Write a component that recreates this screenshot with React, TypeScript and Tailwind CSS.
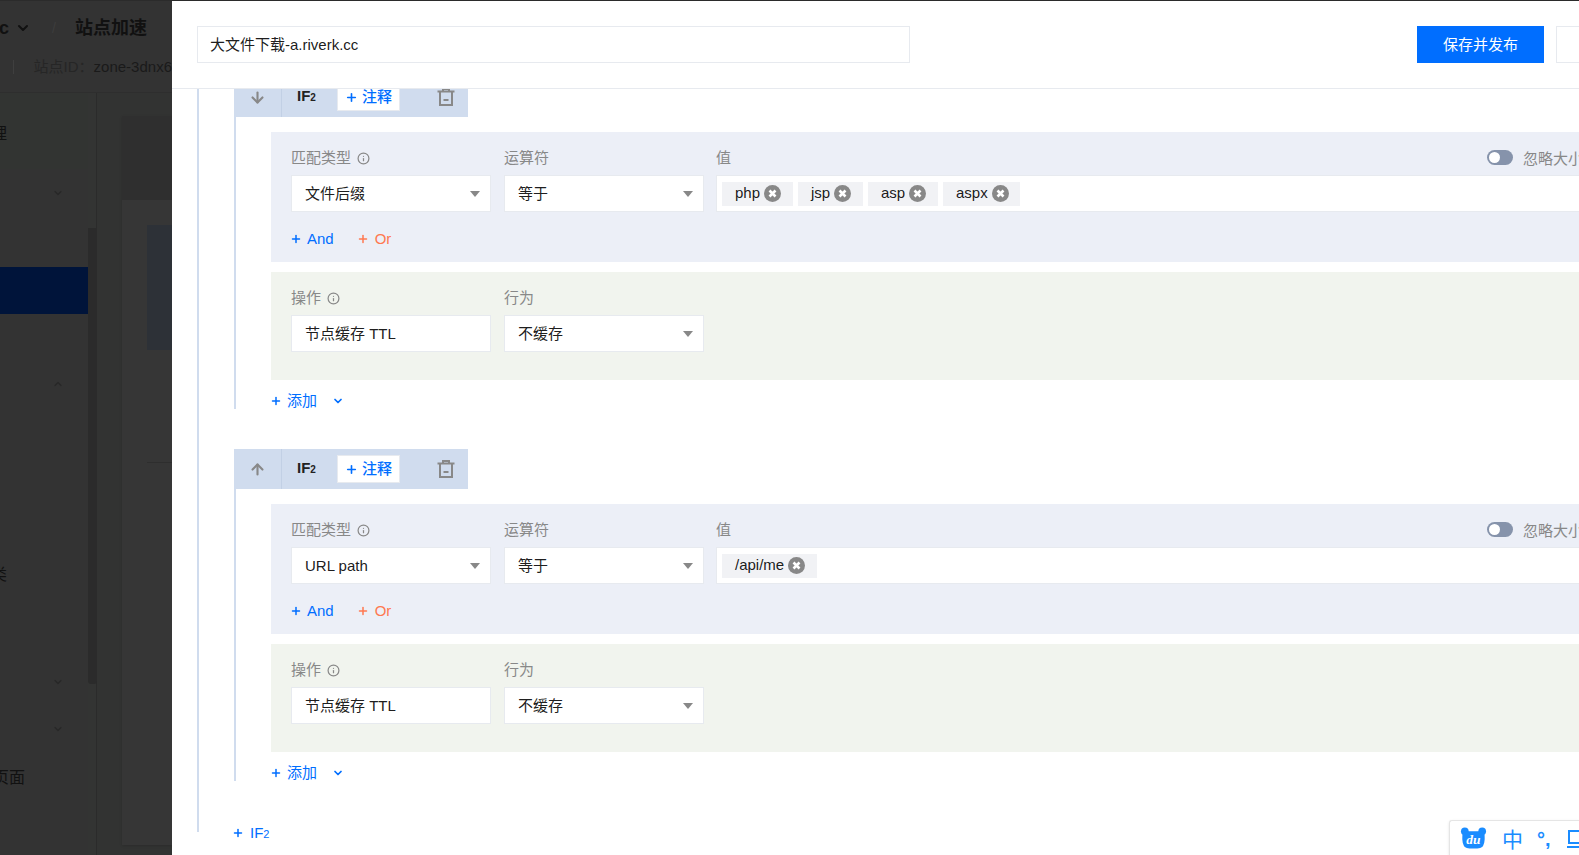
import React from 'react';
import { Plus, ArrowDown, ArrowUp, ChevronDown, ChevronUp, Info } from 'lucide-react';

const font = 'font-["Liberation_Sans","Noto_Sans_CJK_SC",sans-serif]';

const Caret = () => <span className="absolute right-[10px] top-[15px] w-0 h-0 border-x-[5px] border-x-transparent border-t-[6px] border-t-[#888888]" />;

const Select = ({ text }: { text: string }) => (
  <div className="relative w-[200px] shrink-0 h-[37px] bg-white border border-[#e7eaef] pl-[13px] leading-[35px] text-[15px] text-[#000000e6]">
    {text}
    <Caret />
  </div>
);

const Trash = () => (
  <svg width="18" height="18" viewBox="0 0 18 18" fill="none" stroke="#888888" strokeWidth="2">
    <path d="M0.5 3.5h17M6 3V1h6v2M3 4v13h12V4" />
    <path d="M6.5 12h5" />
  </svg>
);

const Chip = ({ text, w }: { text: string; w: string }) => (
  <span className={`flex items-center ${w} shrink-0 h-[24px] bg-[#f1f2f5] pl-[13px] text-[15px] text-[#000000e6]`}>
    {text}
    <span className="relative ml-[4px] w-[17px] h-[17px] rounded-full bg-[#888888] shrink-0">
      <svg className="absolute inset-0" viewBox="0 0 17 17" stroke="white" strokeWidth="2.6">
        <path d="M5.5 5.5l6 6M11.5 5.5l-6 6" />
      </svg>
    </span>
  </span>
);

const Label = ({ text, info }: { text: string; info?: boolean }) => (
  <div className="flex items-center gap-[6px] h-[20px] text-[15px] text-[#888888]">
    {text}
    {info && <Info size={13} strokeWidth={2.25} />}
  </div>
);

const RuleBlock = ({ up, match, chips }: { up?: boolean; match: string; chips: { text: string; w: string }[] }) => (
  <div className="w-[1400px]">
    <div className="border-l-2 border-[#d0dcee] h-[332px] w-[1345px]">
      <div className="flex items-center w-[234px] h-[40px] -ml-[2px] bg-[#d0dcee]">
        <div className="flex items-center justify-center w-[48px] h-full border-r border-[#c2d0e5] text-[#888888]">
          {up ? <ArrowUp size={17} strokeWidth={3} /> : <ArrowDown size={17} strokeWidth={3} />}
        </div>
        <span className="ml-[15px] -mt-[1px] text-[15px] font-bold text-[#222222]">IF<span className="text-[10px]">2</span></span>
        <div className="flex items-center gap-[4px] ml-[21px] w-[63px] h-[28px] shrink-0 bg-white border border-[#e7eaef] pl-[7px] text-[15px] font-medium text-[#006eff]">
          <Plus size={13} strokeWidth={3} />
          注释
        </div>
        <div className="ml-[37px]">
          <Trash />
        </div>
      </div>
      <div className="ml-[35px] mt-[15px] w-[1320px]">
        <div className="h-[130px] bg-[#eceff7] pl-[20px] pt-[16px]">
          <div className="flex h-[27px]">
            <div className="w-[213px] shrink-0"><Label text="匹配类型" info /></div>
            <div className="w-[212px] shrink-0"><Label text="运算符" /></div>
            <div className="w-[771px] shrink-0"><Label text="值" /></div>
            <div className="relative w-[26px] h-[15px] shrink-0 mt-[2px] rounded-full bg-[#8693ab]">
              <span className="absolute left-[2px] top-[2px] w-[11px] h-[11px] rounded-full bg-white" />
            </div>
            <div className="ml-[10px] text-[15px] text-[#888888] whitespace-nowrap">忽略大小写</div>
          </div>
          <div className="flex">
            <Select text={match} />
            <div className="w-[13px] shrink-0" />
            <Select text="等于" />
            <div className="w-[12px] shrink-0" />
            <div className="flex items-center gap-[5px] w-[1000px] shrink-0 h-[37px] bg-white border border-[#e7eaef] pl-[5px]">
              {chips.map((c) => <Chip key={c.text} text={c.text} w={c.w} />)}
            </div>
          </div>
          <div className="flex items-center h-[20px] mt-[17px] text-[15px]">
            <Plus size={12} strokeWidth={3} className="-ml-[1px] text-[#006eff]" />
            <span className="ml-[5px] text-[#006eff]">And</span>
            <Plus size={12} strokeWidth={3} className="ml-[23px] text-[#ff7850]" />
            <span className="ml-[6px] text-[#ff7850]">Or</span>
          </div>
        </div>
        <div className="h-[108px] mt-[10px] bg-[#f1f4ee] pl-[20px] pt-[16px]">
          <div className="flex h-[27px]">
            <div className="w-[213px] shrink-0"><Label text="操作" info /></div>
            <Label text="行为" />
          </div>
          <div className="flex gap-[13px]">
            <div className="w-[200px] shrink-0 h-[37px] bg-white border border-[#e7eaef] pl-[13px] leading-[35px] text-[15px] text-[#000000e6]">节点缓存 TTL</div>
            <Select text="不缓存" />
          </div>
        </div>
        <div className="flex items-center h-[20px] mt-[11px] text-[15px] text-[#006eff]">
          <Plus size={12} strokeWidth={3} className="-ml-[1px]" />
          <span className="ml-[5px]">添加</span>
          <ChevronDown size={12} strokeWidth={3.5} className="ml-[15px]" />
        </div>
      </div>
    </div>
  </div>
);

const SideItem = ({ text, className }: { text: string; className: string }) => (
  <div className={`text-[16px] text-[#111111] whitespace-nowrap ${className}`}>{text}</div>
);

const Backdrop = () => (
  <div className="w-[172px] shrink-0 h-full bg-[#333333] flex flex-col overflow-hidden">
    <div className="h-[92px] shrink-0 border-b border-[#2e2e2e] overflow-hidden">
      <div className="flex items-center h-[52px] pt-[2px] text-[18px] font-bold text-[#111111] whitespace-nowrap">
        <span className="-ml-[1px]">c</span>
        <ChevronDown size={16} strokeWidth={3} className="ml-[6px]" />
        <span className="ml-[21px] text-[#3d3d3d] font-normal text-[14px]">/</span>
        <span className="ml-[19px]">站点加速</span>
      </div>
      <div className="flex items-center h-[24px] mt-[2px] text-[15px] whitespace-nowrap">
        <span className="ml-[13px] w-px h-[14px] bg-[#3f3f3f]" />
        <span className="ml-[20px] text-[#262626]">站点ID：<span className="text-[#1a1a1a]">zone-3dnx6</span></span>
      </div>
    </div>
    <div className="flex flex-1 min-h-0">
      <div className="w-[88px] shrink-0 bg-[#333333]">
        <div className="h-[76px] bg-[#323432] pt-[29px]">
          <SideItem text="理" className="-ml-[9px] h-[24px]" />
        </div>
        <div className="h-[98px] pt-[18px] pl-[52px] text-[#282828]"><ChevronDown size={12} strokeWidth={2.5} /></div>
        <div className="h-[47px] bg-[#00143a]" />
        <div className="h-[76px] pt-[64px] pl-[52px] text-[#282828]"><ChevronUp size={12} strokeWidth={2.5} /></div>
        <SideItem text="类" className="mt-[173px] -ml-[9px] h-[24px]" />
        <div className="h-[47px] mt-[89px] pl-[52px] text-[#282828]"><ChevronDown size={12} strokeWidth={2.5} /></div>
        <div className="h-[43px] pl-[52px] text-[#282828]"><ChevronDown size={12} strokeWidth={2.5} /></div>
        <SideItem text="页面" className="-ml-[7px] h-[24px]" />
      </div>
      <div className="w-[9px] shrink-0 bg-[#333433] border-r border-[#2b2b2b] pt-[135px]">
        <div className="h-[456px] w-[9px] bg-[#2b2b2b] rounded-b-[3px]" />
      </div>
      <div className="flex-1 bg-[#323332] pl-[25px] pt-[23px] pb-[10px]">
        <div className="h-full flex flex-col shadow-sm">
          <div className="h-[84px] bg-[#2f2f2f]" />
          <div className="flex-1 bg-[#363636] pl-[25px] pt-[25px]">
            <div className="h-[125px] bg-[#2d3137]" />
            <div className="h-px mt-[112px] bg-[#2e2e2e]" />
          </div>
        </div>
      </div>
    </div>
  </div>
);

export default function App() {
  return (
    <div className={`relative flex w-[1579px] h-[855px] overflow-hidden border-t border-[#2b2b2b] bg-white ${font}`}>
      <Backdrop />
      <div className="flex-1 min-w-0 flex flex-col">
        <div className="relative z-10 flex items-start h-[88px] shrink-0 bg-white border-b border-[#e7eaef] pl-[25px] pt-[25px]">
          <div className="w-[713px] shrink-0 h-[37px] border border-[#e7eaef] pl-[12px] leading-[36px] text-[15px] text-[#000000e6]">大文件下载-a.riverk.cc</div>
          <button className="ml-[507px] w-[127px] shrink-0 h-[37px] pt-[1px] bg-[#006eff] text-[15px] text-white">保存并发布</button>
          <div className="ml-[12px] w-[100px] shrink-0 h-[37px] border border-[#e7eaef]" />
        </div>
        <div className="flex-1 min-h-0 overflow-hidden pl-[25px]">
          <div className="border-l-2 border-[#d0dcee] h-[755px] -mt-[12px] pl-[35px]">
            <RuleBlock match="文件后缀" chips={[
              { text: 'php', w: 'w-[71px]' },
              { text: 'jsp', w: 'w-[65px]' },
              { text: 'asp', w: 'w-[70px]' },
              { text: 'aspx', w: 'w-[77px]' },
            ]} />
            <div className="h-[40px]" />
            <RuleBlock up match="URL path" chips={[{ text: '/api/me', w: 'w-[95px]' }]} />
            <div className="flex items-center h-[20px] mt-[42px] -ml-[2px] text-[15px] text-[#006eff]">
              <Plus size={12} strokeWidth={3} />
              <span className="ml-[6px]">IF<span className="text-[11px]">2</span></span>
            </div>
          </div>
        </div>
      </div>
      <div className="absolute right-0 bottom-0 flex items-center w-[130px] h-[35px] bg-white border-l border-t border-[#e5e5e5] rounded-tl-[3px] pl-[10px] shadow-sm text-[#1a8cff]">
        <svg width="27" height="24" viewBox="0 0 28 24" className="shrink-0">
          <circle cx="5" cy="5" r="4" fill="#1a8cff" />
          <circle cx="23" cy="5" r="4" fill="#1a8cff" />
          <path d="M3 5h22c1 6 1 11-1 15-1 2-4 3-10 3s-9-1-10-3C2 16 2 11 3 5z" fill="#1a8cff" />
          <text x="14" y="18" textAnchor="middle" fontSize="14" fontWeight="700" fontStyle="italic" fill="white" fontFamily="Liberation Serif">du</text>
        </svg>
        <span className="ml-[15px] mt-[2px] w-[20px] shrink-0 text-[21px] leading-none">中</span>
        <span className="ml-[15px] mt-[2px] w-[16px] shrink-0 text-[20px] font-bold leading-none">°,</span>
        <svg width="20" height="20" viewBox="0 0 20 20" fill="none" stroke="#1a8cff" strokeWidth="2" className="ml-[14px] mt-[2px] shrink-0">
          <path d="M2 2h16v12H2zM0 18h20" />
        </svg>
      </div>
    </div>
  );
}
